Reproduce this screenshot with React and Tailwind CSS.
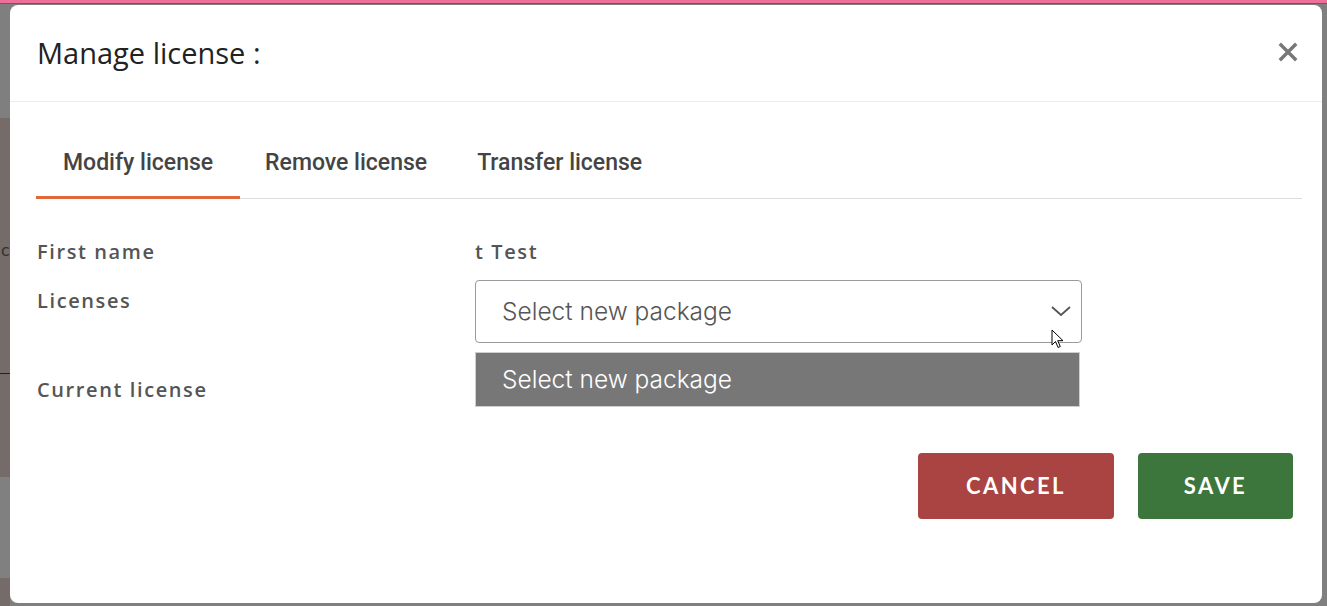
export default function App() {
  return (
    <div className="relative h-[606px] w-[1327px] overflow-hidden bg-[#7f7f7f]">
      {/* page behind the overlay */}
      <div className="h-[3px] bg-[#ee6f98]" />
      <div className="h-px bg-[#5f5f5f]" />
      <div className="flex w-[10px] flex-col">
        <div className="h-[114px] bg-[#7f7f7f]" />
        <div className="relative h-[359px] bg-[#756c6a]">
          <span className="absolute left-[1px] top-[122px] font-['Lato',sans-serif] text-[18px] leading-none text-[#333]">c</span>
          <div className="absolute left-0 top-[255px] h-px w-full bg-[#222]" />
        </div>
        <div className="h-[101px] bg-[#808080]" />
        <div className="h-[30px] bg-[#756c6a]" />
      </div>

      {/* modal */}
      <div className="absolute left-[10px] top-[5px] flex h-[598px] w-[1312px] flex-col rounded-[8px] bg-white">
        <div className="flex h-[97px] items-center justify-between border-b border-[#ececec] pl-[27px] pr-[24px]">
          <h1 className="font-['Open_Sans',sans-serif] text-[29px] font-normal text-[#222]">Manage license :</h1>
          <svg className="-mt-[2px]" width="20" height="20" viewBox="0 0 20 20" stroke="#777" strokeWidth="3.4" strokeLinecap="square">
            <path d="M3 3l14 14M17 3L3 17" />
          </svg>
        </div>

        <div className="pl-[26px] pr-[20px]">
          <div className="mt-[19px] flex border-b border-[#dddddd] font-['Roboto',sans-serif] text-[23px] font-medium text-[#444]">
            <div className="-mb-px border-b-[3px] border-[#e0683a] px-[27px] pb-[15px] pt-[25px]">Modify license</div>
            <div className="px-[25px] pb-[15px] pt-[25px]">Remove license</div>
            <div className="px-[25px] pb-[15px] pt-[25px]">Transfer license</div>
          </div>

          <div className="mt-[38px] font-['Open_Sans',sans-serif] text-[20px] font-semibold leading-[30px] tracking-[1.6px] text-[#555]">
            <div className="flex h-[30px] items-center">
              <div className="w-[439px] pl-[1px]">First name</div>
              <div>t Test</div>
            </div>
            <div className="mt-[13px] flex">
              <div className="w-[439px] pl-[1px] pt-[6px]">Licenses</div>
              <div className="relative">
                <div className="flex h-[63px] w-[607px] items-center justify-between rounded-[4px] border border-[#9a9a9a] pl-[26px] pr-[9px]">
                  <span className="font-['Inter',sans-serif] text-[24.5px] font-light tracking-normal text-[#555]">Select new package</span>
                  <svg width="22" height="14" viewBox="0 0 22 14" fill="none" stroke="#555" strokeWidth="1.8">
                    <path d="M2 3l9 8 9-8" />
                  </svg>
                </div>
                <div className="mt-[9px] flex h-[55px] w-[605px] items-center border border-[#cfcfcf] bg-[#777777] pl-[26px] font-['Inter',sans-serif] text-[24.5px] font-light tracking-normal text-white">
                  Select new package
                </div>
                {/* cursor */}
                <svg className="absolute left-[576px] top-[49px]" width="14" height="20" viewBox="0 0 14 20">
                  <path d="M1 1v15l3.5-3.5 2.6 6 2.2-1-2.6-5.8H12z" fill="#fff" stroke="#000" strokeWidth="1" strokeLinejoin="round" />
                </svg>
              </div>
            </div>
            <div className="-mt-[32px] pl-[1px]">Current license</div>
          </div>

          <div className="mt-[48px] flex justify-end gap-[24px] pr-[9px] font-['Lato',sans-serif] text-[22px] font-bold tracking-[2.4px] text-white [text-shadow:1px_2px_2px_rgba(0,0,0,0.35)]">
            <button className="h-[66px] w-[196px] rounded-[4px] bg-[#a94442]">CANCEL</button>
            <button className="h-[66px] w-[155px] rounded-[4px] bg-[#3c763d]">SAVE</button>
          </div>
        </div>
      </div>
    </div>
  )
}
